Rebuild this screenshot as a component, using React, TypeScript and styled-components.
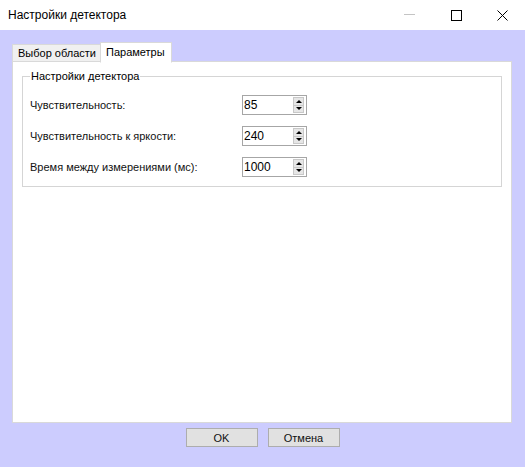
import React from "react";
import styled, { createGlobalStyle } from "styled-components";

const Global = createGlobalStyle`
  html, body { margin: 0; padding: 0; }
  body { font-family: "Liberation Sans", Arial, sans-serif; }
  * { box-sizing: border-box; }
`;

const Win = styled.div`
  width: 525px;
  height: 467px;
  display: flex;
  flex-direction: column;
  background: #ccccfe;
  overflow: hidden;
`;

const TitleBar = styled.div`
  height: 30px;
  flex: 0 0 30px;
  background: #ffffff;
  display: flex;
  align-items: center;
  padding-left: 8px;
`;

const Title = styled.div`
  flex: 1;
  font-size: 12px;
  color: #000;
`;

const Caption = styled.div`
  width: 46px;
  height: 30px;
  display: flex;
  align-items: center;
  justify-content: center;
`;

const Body = styled.div`
  flex: 1;
  display: flex;
  flex-direction: column;
  padding: 12px 13px 0 12px;
`;

const TabStrip = styled.div`
  display: flex;
  align-items: flex-end;
  height: 20px;
  position: relative;
  z-index: 1;
  margin-bottom: -1px;
`;

const Tab = styled.div<{ $active?: boolean }>`
  font-size: 11px;
  color: #000;
  display: flex;
  align-items: center;
  border: 1px solid #d9d9d9;
  border-bottom: ${(p) => (p.$active ? "1px solid #fff" : "1px solid #d9d9d9")};
  background: ${(p) => (p.$active ? "#ffffff" : "#f0f0f0")};
  height: ${(p) => (p.$active ? "21px" : "18px")};
  padding: ${(p) => (p.$active ? "0 6px 2px 5px" : "0 4px 0 5px")};
  margin-left: ${(p) => (p.$active ? "-1px" : "0")};
  margin-bottom: ${(p) => (p.$active ? "-1px" : "0")};
`;

const Panel = styled.div`
  height: 362px;
  background: #ffffff;
  border: 1px solid #d9d9d9;
  padding: 8px 9px;
`;

const Group = styled.fieldset`
  margin: 0;
  border: 1px solid #d5d5d5;
  padding: 12px 7px 9px 7px;
  display: grid;
  grid-template-columns: 212px 65px;
  row-gap: 11px;
  align-items: center;
`;

const Legend = styled.legend`
  font-size: 11px;
  color: #000;
  padding: 0 1px;
  margin-left: 0px;
  line-height: 13px;
`;

const Label = styled.div`
  font-size: 11px;
  color: #111;
`;

const Spin = styled.div`
  height: 20px;
  border: 1px solid #a6a6a6;
  background: #fff;
  display: flex;
  align-items: center;
  padding: 0 2px 0 1px;
`;

const SpinValue = styled.div`
  flex: 1;
  font-size: 12px;
  color: #000;
  line-height: 18px;
`;

const SpinButtons = styled.div`
  width: 11px;
  height: 16px;
  display: flex;
  flex-direction: column;
`;

const SpinBtn = styled.div`
  flex: 1;
  background: #e6e6e6;
  border: 1px solid #c8c8c8;
  display: flex;
  align-items: center;
  justify-content: center;
  & + & { border-top: none; }
`;

const Arrow = styled.div<{ $up?: boolean }>`
  width: 0;
  height: 0;
  border-left: 3px solid transparent;
  border-right: 3px solid transparent;
  ${(p) => (p.$up ? "border-bottom: 3px solid #000;" : "border-top: 3px solid #000;")}
`;

const Footer = styled.div`
  flex: 1;
  display: flex;
  justify-content: center;
  align-items: flex-start;
  padding-top: 5px;
  padding-left: 1px;
  gap: 10px;
`;

const Button = styled.div`
  width: 72px;
  height: 19px;
  background: #e1e1e1;
  border: 1px solid #adadad;
  font-size: 11px;
  display: flex;
  align-items: center;
  justify-content: center;
  color: #111;
`;

const rows = [
  { label: "Чувствительность:", value: "85" },
  { label: "Чувствительность к яркости:", value: "240" },
  { label: "Время между измерениями (мс):", value: "1000" },
];

export default function App() {
  return (
    <>
      <Global />
      <Win>
        <TitleBar>
          <Title>Настройки детектора</Title>
          <Caption>
            <svg width="12" height="2" viewBox="0 0 12 2">
              <rect x="0" y="0" width="11" height="1" fill="#c4c4c4" />
            </svg>
          </Caption>
          <Caption>
            <svg width="11" height="11" viewBox="0 0 11 11">
              <rect x="0.5" y="0.5" width="10" height="10" fill="none" stroke="#000" strokeWidth="1" />
            </svg>
          </Caption>
          <Caption>
            <svg width="11" height="11" viewBox="0 0 11 11">
              <path d="M0.5 0.5 L10.5 10.5 M10.5 0.5 L0.5 10.5" stroke="#000" strokeWidth="1" />
            </svg>
          </Caption>
        </TitleBar>
        <Body>
          <TabStrip>
            <Tab>Выбор области</Tab>
            <Tab $active>Параметры</Tab>
          </TabStrip>
          <Panel>
            <Group>
              <Legend>Настройки детектора</Legend>
              {rows.map((r) => (
                <React.Fragment key={r.label}>
                  <Label>{r.label}</Label>
                  <Spin>
                    <SpinValue>{r.value}</SpinValue>
                    <SpinButtons>
                      <SpinBtn>
                        <Arrow $up />
                      </SpinBtn>
                      <SpinBtn>
                        <Arrow />
                      </SpinBtn>
                    </SpinButtons>
                  </Spin>
                </React.Fragment>
              ))}
            </Group>
          </Panel>
          <Footer>
            <Button>OK</Button>
            <Button>Отмена</Button>
          </Footer>
        </Body>
      </Win>
    </>
  );
}
